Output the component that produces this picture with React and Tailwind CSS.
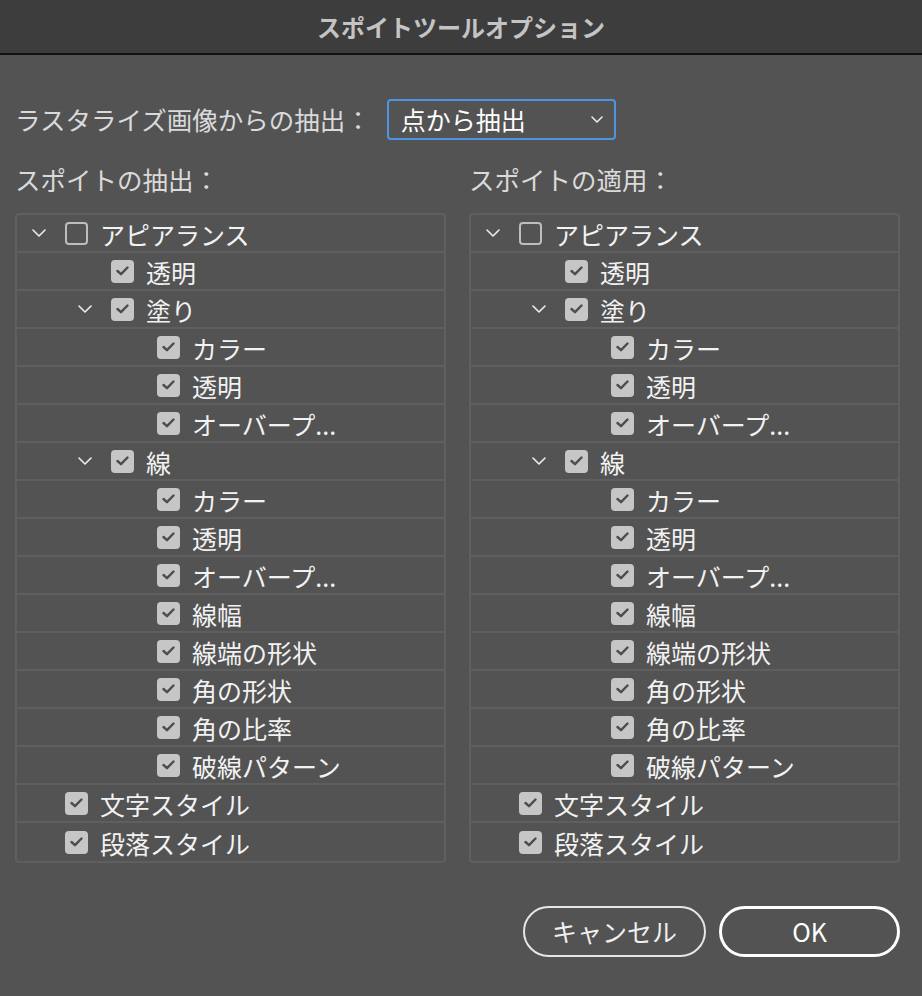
import * as React from 'react';

const FONT = { fontFamily: '"Noto Sans CJK JP", "Noto Sans", sans-serif' };

// tree rows: level, label, chevron?, checked
const ROWS = [
  { level: 0, label: 'アピアランス', chevron: true, checked: false },
  { level: 1, label: '透明' },
  { level: 1, label: '塗り', chevron: true },
  { level: 2, label: 'カラー' },
  { level: 2, label: '透明' },
  { level: 2, label: 'オーバープ...' },
  { level: 1, label: '線', chevron: true },
  { level: 2, label: 'カラー' },
  { level: 2, label: '透明' },
  { level: 2, label: 'オーバープ...' },
  { level: 2, label: '線幅' },
  { level: 2, label: '線端の形状' },
  { level: 2, label: '角の形状' },
  { level: 2, label: '角の比率' },
  { level: 2, label: '破線パターン' },
  { level: 0, label: '文字スタイル' },
  { level: 0, label: '段落スタイル' },
];

const INDENT = ['pl-[14px]', 'pl-[60px]', 'pl-[106px]'];

const Chevron = ({ className = '' }) => (
  <svg className={className} width="14" height="8" viewBox="0 0 14 8" fill="none">
    <polyline points="1,1 7,7 13,1" stroke="#ececec" strokeWidth="1.6" strokeLinecap="round" strokeLinejoin="round" />
  </svg>
);

const Checkbox = ({ checked }) => {
  if (!checked) {
    return <div className="w-[23px] h-[23px] rounded-[4px] border-2 border-[#bdbdbd] shrink-0" />;
  }
  return (
    <div className="w-[23px] h-[23px] rounded-[4px] bg-[#c6c6c6] flex items-center justify-center shrink-0">
      <svg width="13" height="10" viewBox="0 0 13 10" fill="none">
        <polyline points="1.5,5 5,8.2 11.5,1.5" stroke="#4d4d4d" strokeWidth="2.4" strokeLinecap="round" strokeLinejoin="round" />
      </svg>
    </div>
  );
};

const TreePanel = () => (
  <div className="border-2 border-[#5f5f5f] rounded-[4px] flex flex-col">
    {ROWS.map((row, i) => (
      <div
        key={i}
        className={`h-[38px] flex items-center ${INDENT[row.level]} ${i < ROWS.length - 1 ? 'border-b-2 border-[#5f5f5f]' : ''}`}
      >
        <div className="w-[34px] h-full flex items-center shrink-0">
          {row.chevron && <Chevron className="ml-[1px]" />}
        </div>
        <Checkbox checked={row.checked !== false} />
        <span className="ml-[12px] mt-[3px] text-[25px] leading-none text-[#f2f2f2] whitespace-nowrap">{row.label}</span>
      </div>
    ))}
  </div>
);

export default function App() {
  return (
    <div className="w-[922px] h-[996px] bg-[#535353] flex flex-col" style={FONT}>
      {/* title bar */}
      <div className="h-[55px] bg-[#3d3d3d] border-b-2 border-[#111111] flex items-center justify-center shrink-0">
        <span className="text-[24px] font-bold text-[#c4c4c4]">スポイトツールオプション</span>
      </div>

      <div className="pl-[15px] pr-[22px] flex flex-col">
        {/* raster extraction row */}
        <div className="mt-[44px] flex items-center h-[41px]">
          <span className="text-[25.5px] text-[#dadada] whitespace-nowrap">ラスタライズ画像からの抽出：</span>
          <div className="ml-[16px] w-[229px] h-[41px] border-2 border-[#4d95e0] rounded-[4px] flex items-center justify-between pl-[12px] pr-[11px]">
            <span className="text-[25px] text-white leading-none">点から抽出</span>
            <svg width="12" height="7" viewBox="0 0 12 7" fill="none">
              <polyline points="1,1 6,6 11,1" stroke="#ececec" strokeWidth="1.5" strokeLinecap="round" strokeLinejoin="round" />
            </svg>
          </div>
        </div>

        {/* two columns */}
        <div className="mt-[26px] grid grid-cols-2 gap-[23px]">
          <div className="flex flex-col">
            <span className="text-[25.5px] text-[#dadada] leading-none h-[25px] mb-[22px]">スポイトの抽出：</span>
            <TreePanel />
          </div>
          <div className="flex flex-col">
            <span className="text-[25.5px] text-[#dadada] leading-none h-[25px] mb-[22px]">スポイトの適用：</span>
            <TreePanel />
          </div>
        </div>

        {/* buttons */}
        <div className="mt-[43px] flex justify-end gap-[13px]">
          <button className="w-[183px] h-[51px] rounded-full border-2 border-[#e6e6e6] text-[25px] text-[#efefef] flex items-center justify-center">
            キャンセル
          </button>
          <button className="w-[181px] h-[51px] rounded-full border-[3px] border-white text-[25px] text-white flex items-center justify-center">
            OK
          </button>
        </div>
      </div>
    </div>
  );
}
